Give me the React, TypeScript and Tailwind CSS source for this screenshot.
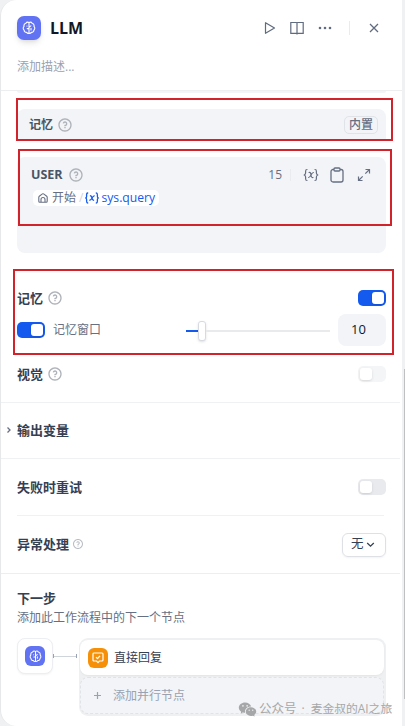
import type { ReactNode } from "react";
import { RiQuestionLine, RiWechatFill } from "react-icons/ri";

function BrainIcon({ size }: { size: number }) {
  return (
    <svg width={size} height={size} viewBox="0 0 14 14" fill="none" stroke="white" strokeWidth="1.1" strokeLinecap="round" strokeLinejoin="round">
      <path d="M7 1.500C5.700.9 4.500 1.200 3.900 2.200 2.400 2.600 1.700 4 2 5.300.9 6.500 1 8.200 2.100 9.100c.1 1.500 1.300 2.400 2.500 2.300.6.900 1.600 1.200 2.400.8M7 1.500c1.300-.6 2.500-.3 3.100.7 1.500.4 2.200 1.800 1.900 3.100 1.100 1.200 1 2.900-.1 3.800-.1 1.500-1.300 2.400-2.500 2.300-.6.900-1.600 1.200-2.400.8" />
      <path d="M7 1.700v10.300M7 7.600H5.200M8.900 4.900 7 6.200M5 5v.1M9 8.900V7.200" />
    </svg>
  );
}

function Help({ small = false }: { small?: boolean }) {
  return <RiQuestionLine className={small ? "size-[12px] text-[#b9bdc4]" : "size-[16px] text-[#aeb2b9]"} />;
}

function Toggle({ on = false, faint = false }: { on?: boolean; faint?: boolean }) {
  const track = on ? "justify-end bg-[#155aef]" : faint ? "justify-start bg-[#f4f5f6]" : "justify-start bg-[#e9eaed]";
  return (
    <span className={`flex h-4 w-7 shrink-0 items-center rounded-[5px] p-[2px] ${track}`}>
      <span className="h-3 w-3 rounded-[3px] bg-white shadow-sm" />
    </span>
  );
}

function Title({ children }: { children: ReactNode }) {
  return <span className="text-[13px] font-semibold leading-4 text-[#354052]">{children}</span>;
}

function VarMark() {
  return (
    <svg width="16" height="14" viewBox="0 0 16 14" fill="none" stroke="currentColor" strokeWidth="1.200" strokeLinecap="round" strokeLinejoin="round">
      <path d="M4 1.500C2.600 1.500 2.600 2.300 2.600 3.300v1.800C2.600 6.300 2 6.700 1.200 7c.8.300 1.400.7 1.400 1.900v1.800c0 1 0 1.800 1.400 1.800M12 1.500c1.400 0 1.400.8 1.400 1.800v1.800c0 1.200.6 1.600 1.400 1.900-.8.300-1.400.7-1.400 1.900v1.800c0 1 0 1.800-1.400 1.800" />
      <path d="M6 4.500c1.500-.3 1.700.6 2 2.500.3 1.800.6 2.800 2 2.500M10.400 4.500C8.500 4.500 7.500 9.500 5.600 9.500" />
    </svg>
  );
}

function HeaderActions() {
  return (
    <div className="flex h-6 items-center text-[#606b7f]">
      <svg width="12" height="14" viewBox="0 0 12 14" fill="none" stroke="currentColor" strokeWidth="1.200" strokeLinejoin="round">
        <path d="M1.500 1.700v10.600L10.500 7Z" />
      </svg>
      <svg className="ml-[14px]" width="14" height="14" viewBox="0 0 14 14" fill="none" stroke="currentColor" strokeWidth="1.200">
        <path d="M7 13.500V2.200C7 1.800 6.700 1.500 6.300 1.500H.8v10.800h12.400V1.500H7.700C7.300 1.500 7 1.800 7 2.200" />
      </svg>
      <svg className="ml-[14px]" width="14" height="14" viewBox="0 0 14 14" fill="currentColor">
        <circle cx="2" cy="7" r="1.300" />
        <circle cx="7" cy="7" r="1.300" />
        <circle cx="12" cy="7" r="1.300" />
      </svg>
      <span className="ml-[17px] h-[14px] w-px bg-[#e9ebef]" />
      <svg className="ml-[19px]" width="10" height="10" viewBox="0 0 10 10" fill="none" stroke="currentColor" strokeWidth="1.300">
        <path d="m1 1 8 8M9 1 1 9" />
      </svg>
    </div>
  );
}

export default function App() {
  return (
    <div className="relative flex h-[726px] w-[405px] overflow-hidden whitespace-nowrap bg-[#f0f1f2] font-['Open_Sans','Noto_Sans_CJK_SC',sans-serif] text-[12px] text-[#676f83]">
      <main className="flex h-[726px] w-[402px] flex-col rounded-l-[16px] border-l border-[#e7e8ea] bg-white">
        <header className="h-[90px] shrink-0 pl-4 pr-[23px] pt-4">
          <div className="flex items-center">
            <span className="flex size-6 items-center justify-center rounded-[7px] bg-[#6172f3] shadow-md">
              <BrainIcon size={14} />
            </span>
            <h1 className="ml-[9px] flex-1 text-[16px] font-bold leading-6 text-[#101828]">LLM</h1>
            <HeaderActions />
          </div>
          <p className="mt-[18px] leading-[18px] text-[#98a2b2]">添加描述...</p>
        </header>

        <section className="flex h-[312px] shrink-0 flex-col border-t border-[#edeef0] pl-4 pr-4">
          <div className="h-[2px] shrink-0 rounded-b-lg bg-[#f2f4f7]" />
          <div className="mt-4 flex h-[32px] shrink-0 items-center rounded-t-lg bg-[#f2f4f7] pl-3 pr-2">
            <span className="font-semibold leading-4 text-[#495464]">记忆</span>
            <span className="ml-[4px] flex-1"><Help /></span>
            <span className="flex h-[18px] items-center rounded-[5px] border border-[#e0e3e8] px-1 font-medium">内置</span>
          </div>

          <div className="mt-[16px] h-[96px] shrink-0 rounded-lg bg-[#f2f4f7] px-[14px] pt-[9px]">
            <div className="flex h-[18px] items-center">
              <span className="text-[12.500px] font-bold leading-4 text-[#495464]">USER</span>
              <span className="ml-[5px] flex-1"><Help /></span>
              <span className="text-[12px]">15</span>
              <span className="ml-[8px] mr-[12px] h-3 w-px bg-[#e9ebf0]" />
              <VarMark />
              <svg className="ml-[11px]" width="14" height="16" viewBox="0 0 14 16" fill="none" stroke="currentColor" strokeWidth="1.300">
                <rect x="1" y="2.500" width="12" height="12.500" rx="2" />
                <rect x="4" y="1" width="6" height="3" rx="1" fill="#f2f4f7" />
              </svg>
              <svg className="ml-[13px] mr-px" width="14" height="14" viewBox="0 0 14 14" fill="none" stroke="currentColor" strokeWidth="1.200">
                <path d="M8.500 1.500h4v4M12.500 1.500 8.300 5.700M1.500 8.500v4h4M1.500 12.500l4.200-4.200" />
              </svg>
            </div>
            <div className="ml-[2px] mt-[6px] flex h-4 w-[126px] items-center rounded-[5px] bg-white pl-[5px]">
              <svg width="10" height="10" viewBox="0 0 10 10" fill="none" stroke="currentColor" strokeWidth="1.100" strokeLinejoin="round">
                <path d="M.8 4.200Q.8 3.600 1.300 3.200L4.400.9Q5 .5 5.600.9l3.100 2.300Q9.200 3.600 9.200 4.200v4q0 1-1 1H1.800q-1 0-1-1Z" />
                <path d="M3 9V6.500a2 2 0 0 1 4 0V9" />
              </svg>
              <span className="ml-[4px]">开始</span>
              <span className="ml-[3px] text-[#cfd4db]">/</span>
              <span className="ml-[2px] flex items-center text-[#155aef]">
                <svg width="14" height="12" viewBox="0 0 14 12" fill="none" stroke="currentColor" strokeWidth="1.300" strokeLinecap="round">
                  <path d="M2.700 1C1.600 1 1.600 2 1.600 3v1.500Q1.600 5.700.8 6q.8.300.8 1.500V9c0 1 0 2 1.100 2M11.300 1c1.100 0 1.100 1 1.100 2v1.500q0 1.200.8 1.500-.8.300-.8 1.500V9c0 1 0 2-1.100 2M5.400 3.800C7.300 3.300 6.700 8.700 8.600 8.200M9.200 3.800C7.400 3.800 6.600 8.200 4.800 8.200" />
                </svg>
                <span className="ml-[2px] text-[12.200px]">sys.query</span>
              </span>
            </div>
          </div>

          <div className="mt-[37px] flex h-4 shrink-0 items-center">
            <Title>记忆</Title>
            <span className="ml-[4px] flex-1"><Help /></span>
            <Toggle on />
          </div>
          <div className="mt-2 flex h-8 shrink-0 items-center">
            <Toggle on />
            <span className="ml-2 w-[133px]">记忆窗口</span>
            <span className="flex h-5 w-[144px] shrink-0 items-center pt-px">
              <span className="h-[2px] w-3 bg-[#155aef]" />
              <span className="h-5 w-2 shrink-0 rounded-[3px] border border-[#d7dbe1] bg-white shadow-sm" />
              <span className="h-[2px] flex-1 bg-[#e9eaec]" />
            </span>
            <span className="ml-2 flex h-8 w-12 shrink-0 items-center rounded-lg bg-[#f2f4f7] pl-[13px] text-[13px] text-[#101828]">10</span>
          </div>
          <div className="mt-5 flex h-4 shrink-0 items-center">
            <Title>视觉</Title>
            <span className="ml-[4px] flex-1"><Help /></span>
            <Toggle faint />
          </div>
        </section>

        <section className="mr-[2px] flex h-14 shrink-0 items-center border-t border-[#f0f1f3] pb-[2px] pl-[5px]">
          <svg width="6" height="8" viewBox="0 0 6 8" fill="none" stroke="currentColor" strokeWidth="1.300">
            <path d="m1.500 1.500 2.500 2.500-2.500 2.500" />
          </svg>
          <span className="ml-[5px] flex"><Title>输出变量</Title></span>
        </section>

        <section className="mr-[2px] h-[115px] shrink-0 border-t border-[#f0f1f3] px-4 pr-[14px]">
          <div className="flex h-14 items-center justify-between">
            <Title>失败时重试</Title>
            <Toggle />
          </div>
          <div className="mr-[2px] h-px bg-[#f0f1f3]" />
          <div className="flex h-[57px] items-center">
            <span className="mb-[2px] flex"><Title>异常处理</Title></span>
            <span className="mb-px ml-[3px] flex-1"><Help small /></span>
            <span className="flex h-6 w-11 items-center rounded-[6px] border border-[#dde0e5] pl-[8px] text-[12.500px] text-[#354052] shadow-xs">
              无
              <svg className="ml-[2px]" width="9" height="9" viewBox="0 0 9 9" fill="none" stroke="currentColor" strokeWidth="1.300">
                <path d="m1.200 3 3.300 3.200L7.800 3" />
              </svg>
            </span>
          </div>
        </section>

        <section className="mr-[2px] flex-1 border-t border-[#edeef0] pl-4 pr-[14px] pt-4">
          <div className="flex h-4 items-center"><Title>下一步</Title></div>
          <p className="mt-[3px] leading-[18px]">添加此工作流程中的下一个节点</p>
          <div className="mt-[11px] flex">
            <div className="flex size-9 shrink-0 items-center justify-center rounded-lg border border-[#eceef1] bg-white shadow-xs">
              <span className="flex size-5 items-center justify-center rounded-[6px] bg-[#6172f3]">
                <BrainIcon size={13} />
              </span>
            </div>
            <div className="mt-[16px] flex h-1 w-[26px] items-center pr-[2px]">
              <span className="h-1 w-px bg-[#98a2b2]" />
              <span className="h-px flex-1 bg-[#d0d5dc]" />
              <span className="h-1 w-px bg-[#98a2b2]" />
            </div>
            <div className="h-[78px] flex-1 rounded-[9px] bg-[#eff0f2] px-[2px] pl-px pt-[2px]">
              <div className="flex h-[35px] items-center rounded-lg bg-white pl-2 text-[#354052] shadow-xs">
                <span className="flex size-5 items-center justify-center rounded-[6px] bg-[#f79009]">
                  <svg width="12" height="12" viewBox="0 0 12 12" fill="none" stroke="white" strokeWidth="1.200" strokeLinejoin="round">
                    <path d="M2 1h8q1 0 1 1v6q0 1-1 1H7.500L6 10.700 4.500 9H2Q1 9 1 8V2q0-1 1-1Z" />
                    <path d="m4 5.200 1.500 1.300L8 3.800" />
                  </svg>
                </span>
                <span className="ml-[6px]">直接回复</span>
              </div>
              <div className="mt-[2px] flex h-[37px] items-center rounded-lg border border-dashed border-[#e0e3e8] bg-[#f2f4f7] pl-[12px] text-[#98a2b2]">
                <svg width="9" height="9" viewBox="0 0 9 9" stroke="currentColor" strokeWidth="1.200">
                  <path d="M4.500 1v7M1 4.500h7" />
                </svg>
                <span className="ml-[11px]">添加并行节点</span>
              </div>
            </div>
          </div>
        </section>
      </main>

      <div className="absolute right-0 top-[369px] h-[330px] w-px bg-[#bfc0c2]" />
      <div className="absolute left-[16px] top-[98px] h-[43px] w-[377px] border-2 border-[#d1232b]" />
      <div className="absolute left-[18px] top-[149px] h-[77px] w-[374px] border-2 border-[#d1232b]" />
      <div className="absolute left-[13px] top-[269px] h-[86px] w-[381px] border-2 border-[#d1232b]" />
      <div className="absolute left-[238px] top-[700px] flex h-[18px] items-center text-[#a6a7a9]">
        <RiWechatFill className="size-[19px]" />
        <span className="ml-[2px] text-[12.500px]">公众号</span>
        <span className="ml-[5px] text-[12px]">·</span>
        <span className="ml-[6px] text-[11.800px]">麦金叔的AI之旅</span>
      </div>
    </div>
  );
}
